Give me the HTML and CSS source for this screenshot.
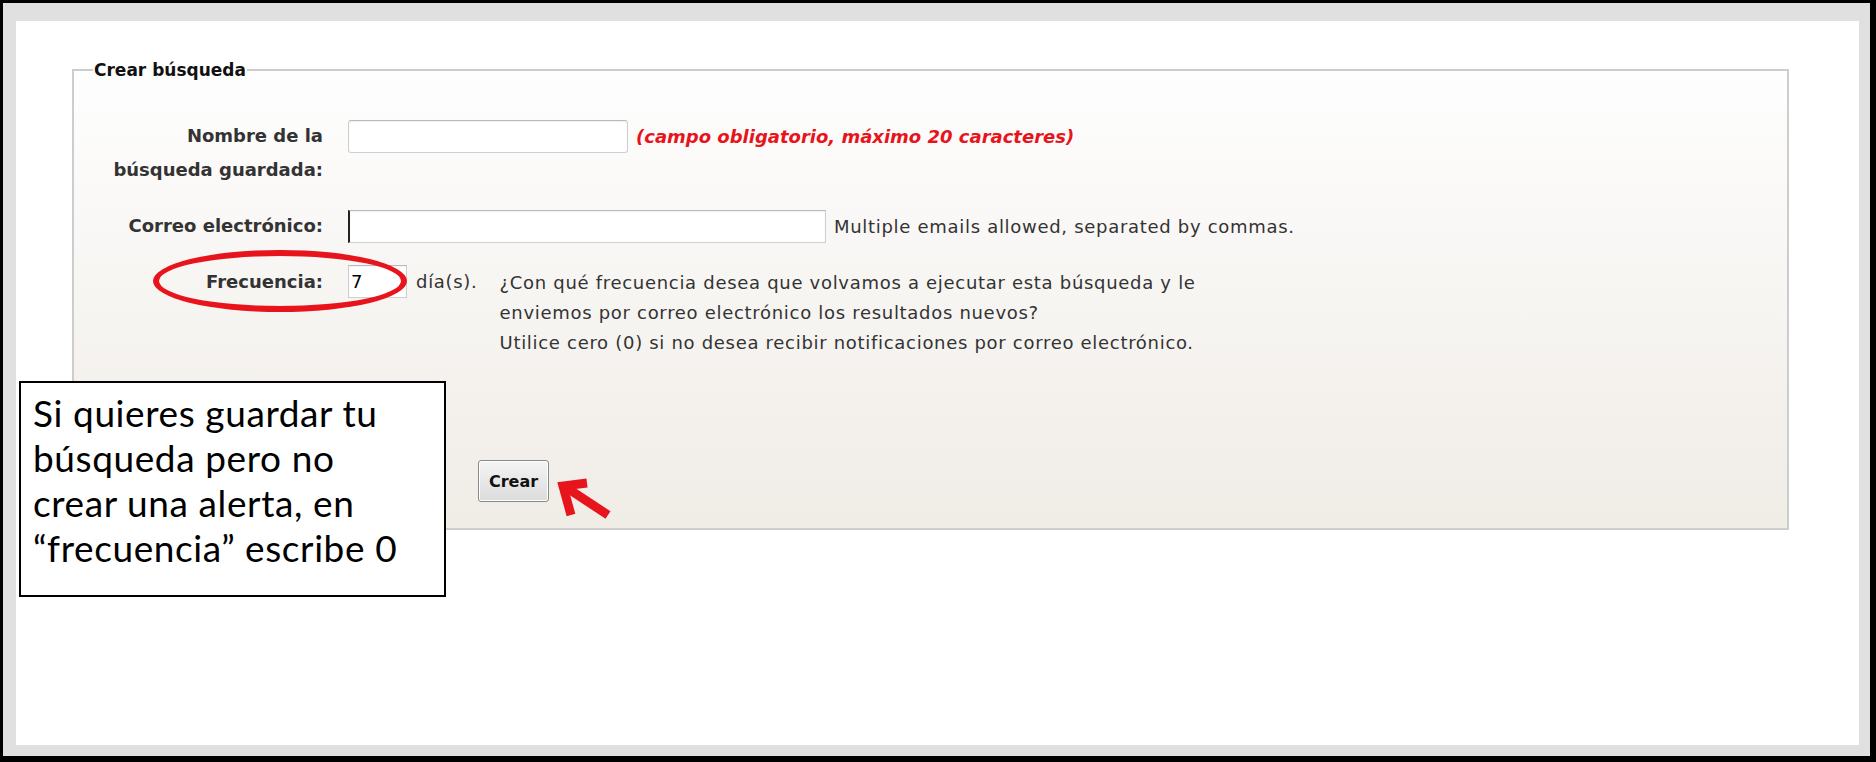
FILE: index.html
```html
<!DOCTYPE html>
<html lang="es">
<head>
    <meta charset="UTF-8">
    <meta name="viewport" content="width=device-width, initial-scale=1.0">
    <title>Crear búsqueda</title>
    <link rel="stylesheet" href="styles.css">
</head>
<body>
    <div class="frame">
        <div class="page">
            <fieldset class="search-box">
                <legend>Crear búsqueda</legend>
                <div class="form-grid">
                    <label class="form-label" for="searchName">Nombre de la<br>búsqueda guardada:</label>
                    <div class="field">
                        <input type="text" id="searchName" class="name-input">
                        <span class="required-note">(campo obligatorio, máximo 20 caracteres)</span>
                    </div>

                    <label class="form-label" for="email">Correo electrónico:</label>
                    <div class="field">
                        <input type="text" id="email" class="email-input">
                        <span class="hint">Multiple emails allowed, separated by commas.</span>
                    </div>

                    <label class="form-label" for="frequency">Frecuencia:</label>
                    <div class="field field-top">
                        <input type="text" id="frequency" class="freq-input" value="7">
                        <span class="days">día(s).</span>
                        <p class="freq-help">¿Con qué frecuencia desea que volvamos a ejecutar esta búsqueda y le<br>enviemos por correo electrónico los resultados nuevos?<br>Utilice cero (0) si no desea recibir notificaciones por correo electrónico.</p>
                    </div>
                </div>
                <div class="actions">
                    <button type="submit" class="create-btn">Crear</button>
                </div>
            </fieldset>

            <!-- annotations on top of the screenshot -->
            <div class="ring"></div>
            <div class="callout">Si quieres guardar tu<br>búsqueda pero no<br>crear una alerta, en<br>“frecuencia” escribe 0</div>
            <svg class="arrow" width="56" height="44" viewBox="0 0 56 44">
                <path d="M8 8 L52 37" stroke="#e8141c" stroke-width="9" fill="none"/>
                <path d="M31 5 L7 8 L15 37" stroke="#e8141c" stroke-width="9" fill="none" stroke-linejoin="miter"/>
            </svg>
        </div>
    </div>
</body>
</html>
```

FILE: styles.css
```css
* {
    box-sizing: border-box;
}

html, body {
    margin: 0;
    padding: 0;
    height: 100%;
}

body {
    font-family: "DejaVu Sans", sans-serif;
    background: #fff;
}

.frame {
    height: 762px;
    border-style: solid;
    border-color: #000;
    border-width: 3px 6px 6px 3px;
    background: #e0e0e0;
    padding: 18px 11px 11px 13px;
}

.page {
    position: relative;
    height: 100%;
    background: #fff;
    padding: 39px 70px 0 56px;
}

.search-box {
    margin: 0;
    padding: 0 0 23px 0;
    border: 2px solid #cdcdcd;
    background: linear-gradient(to bottom, #fefefe, #f0ece6);
    height: 470px;
}

.search-box legend {
    font-weight: bold;
    font-size: 17px;
    line-height: 20px;
    color: #111;
    padding: 0 1px;
    margin-left: 19px;
}

.form-grid {
    display: grid;
    grid-template-columns: 249px 1fr;
    column-gap: 25px;
    row-gap: 22px;
    margin-top: 39px;
}

.form-label {
    text-align: right;
    font-weight: bold;
    font-size: 18px;
    line-height: 34px;
    color: #333;
}

.field {
    display: flex;
    align-items: center;
    height: 34px;
    font-size: 18px;
    letter-spacing: 0.7px;
    color: #333;
}

.field-top {
    align-items: flex-start;
    height: auto;
}

.field input {
    height: 33px;
    border: 1px solid #cfcfcf;
    border-top-color: #b9b9b9;
    background: #fff;
    font-family: inherit;
    font-size: 18px;
    padding: 0 6px;
    box-shadow: inset 0 1px 2px rgba(0, 0, 0, 0.06);
}

.name-input {
    width: 280px;
    border-radius: 3px;
}

.email-input {
    width: 478px;
    border-left: 2px solid #222 !important;
}

.freq-input {
    width: 59px;
    color: #000;
    padding-left: 2px !important;
}

.required-note {
    margin-left: 8px;
    color: #e8141c;
    font-weight: bold;
    font-style: italic;
    letter-spacing: 0;
}

.hint {
    margin-left: 8px;
}

.days {
    margin-left: 9px;
    line-height: 33px;
}

.freq-help {
    margin: 3px 0 0 22px;
    line-height: 30px;
    white-space: nowrap;
}

.actions {
    margin-top: 102px;
    padding-left: 404px;
}

.create-btn {
    width: 71px;
    height: 42px;
    font-family: "DejaVu Sans", sans-serif;
    font-weight: bold;
    font-size: 16px;
    color: #111;
    border: 1px solid #8a8a8a;
    border-radius: 3px;
    background: linear-gradient(to bottom, #f4f4f4, #dcdcdc);
    box-shadow: inset 0 0 0 1px #fff;
}

.ring {
    position: absolute;
    left: 137px;
    top: 229px;
    width: 254px;
    height: 62px;
    border: 6px solid #e8141c;
    border-radius: 50%;
}

.callout {
    position: absolute;
    left: 3px;
    top: 360px;
    width: 427px;
    height: 216px;
    border: 2px solid #000;
    background: #fff;
    padding: 7px 12px;
    font-family: Lato, "Open Sans", sans-serif;
    font-size: 37px;
    letter-spacing: 0.6px;
    line-height: 45px;
    color: #000;
    white-space: nowrap;
}

.arrow {
    position: absolute;
    left: 540px;
    top: 457px;
}
```
